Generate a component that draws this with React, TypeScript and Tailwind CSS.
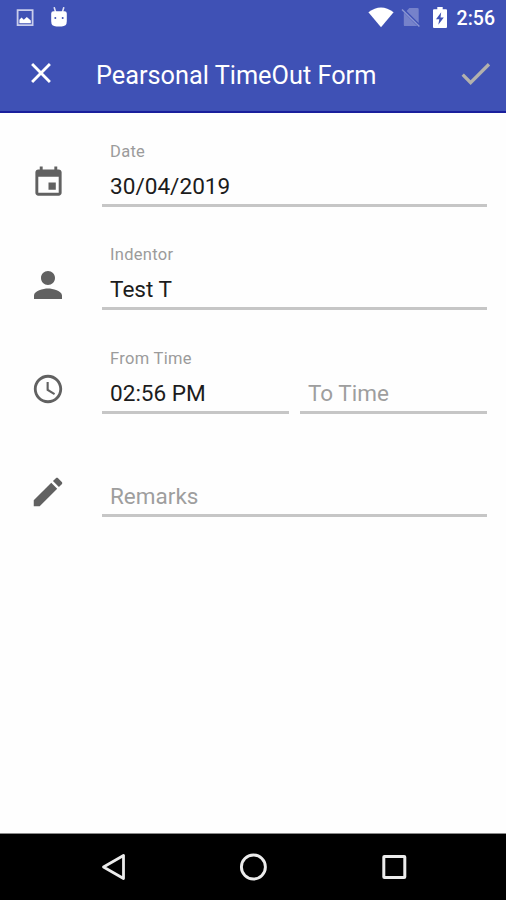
import type { ReactNode } from "react";

type IconProps = { d: string; className?: string };

function Icon({ d, className = "size-[34px]" }: IconProps) {
  return (
    <svg viewBox="0 0 24 24" fill="currentColor" className={className}>
      <path d={d} />
    </svg>
  );
}

const icons = {
  event:
    "M17 12h-5v5h5v-5zM16 1v2H8V1H6v2H5c-1.11 0-1.99.9-1.99 2L3 19c0 1.1.89 2 2 2h14c1.1 0 2-.9 2-2V5c0-1.1-.9-2-2-2h-1V1h-2zm3 18H5V8h14v11z",
  person:
    "M12 12c2.21 0 4-1.79 4-4s-1.79-4-4-4-4 1.79-4 4 1.79 4 4 4zm0 2c-2.67 0-8 1.34-8 4v2h16v-2c0-2.66-5.33-4-8-4z",
  clock:
    "M11.99 2C6.47 2 2 6.48 2 12s4.47 10 9.99 10C17.52 22 22 17.52 22 12S17.52 2 11.99 2zM12 20c-4.42 0-8-3.58-8-8s3.58-8 8-8 8 3.58 8 8-3.58 8-8 8zm.5-13H11v6l5.25 3.15.75-1.23-4.5-2.67z",
  edit: "M3 17.25V21h3.75L17.81 9.94l-3.75-3.75L3 17.25zM20.71 7.04c.39-.39.39-1.02 0-1.41l-2.34-2.34c-.39-.39-1.02-.39-1.41 0l-1.83 1.83 3.75 3.75 1.83-1.83z",
  close:
    "M19 6.41L17.59 5 12 10.59 6.41 5 5 6.41 10.59 12 5 17.59 6.41 19 12 13.41 17.59 19 19 17.59 13.41 12z",
  check: "M9 16.17L4.83 12l-1.42 1.41L9 19 21 7l-1.41-1.41z",
};

function StatusBar() {
  return (
    <div className="flex h-[35px] items-center pl-4 pr-[11px] text-white">
      <svg viewBox="0 0 18 18" className="h-[18px] w-[18px]">
        <path
          d="M1.6 1.2h15v15h-15z"
          fill="none"
          stroke="#c9cdec"
          strokeWidth="1.8"
        />
        <path d="M3.4 14.3v-3.6l2.1-2.1 2.3 2.1 3-2.7 4 3.4v2.9z" fill="#fff" />
      </svg>
      <svg viewBox="0 0 18 20" className="ml-4 h-5 w-[18px] -translate-y-px">
        <path
          d="M4.3 0.8l1.2 4M13.7 0.8l-1.2 4"
          stroke="#dfe2f5"
          strokeWidth="1.6"
          strokeLinecap="round"
        />
        <path
          d="M3.5 4.3h11q2.3 0 2.3 2.3v7.6q0 5.2-5.2 5.2H6.4q-5.2 0-5.2-5.2V6.6q0-2.3 2.3-2.3z"
          fill="#fff"
        />
        <circle cx="5.3" cy="11" r="1" fill="#3f51b5" />
        <circle cx="12.7" cy="11" r="1" fill="#3f51b5" />
      </svg>
      <svg viewBox="0 0 26 21" className="ml-auto h-[21px] w-[26px]">
        <path d="M0.4 5.2Q13-4.3 25.6 5.2L13 20.2z" fill="#fff" />
      </svg>
      <svg viewBox="0 0 20 20" className="ml-[7px] h-5 w-5 -translate-y-px">
        <path
          d="M8.3 1h8.2q1.2 0 1.2 1.2v13.9L5.6 4.1zM2.8 5.6l13.5 13.5H4q-1.2 0-1.2-1.2z"
          fill="#7682ca"
        />
        <path d="M1 2.4l17.4 17" stroke="#8c97d3" strokeWidth="1.4" />
      </svg>
      <svg viewBox="0 0 14 21" className="ml-3 h-[21px] w-3.5">
        <path
          d="M4.3 0h5.4v2.2H13q1 0 1 1V20q0 1-1 1H1q-1 0-1-1V3.2q0-1 1-1h3.3z"
          fill="#fff"
        />
        <path d="M8.2 5.2L3 12.2h3.3l-1 5.6 5.5-7.2H7.5z" fill="#3f51b5" />
      </svg>
      <span className="ml-[10px] pt-[3px] text-[19.5px] font-medium leading-none">
        2:56
      </span>
    </div>
  );
}

function AppBar() {
  return (
    <div className="flex h-[76px] items-center pl-6 pr-[14px] text-white">
      <Icon d={icons.close} className="size-[34px]" />
      <h1 className="ml-[38px] pt-[5px] text-[25.3px] leading-none">
        Pearsonal TimeOut Form
      </h1>
      <Icon
        d={icons.check}
        className="ml-auto size-[39px] translate-x-[3px] text-[#b3b1ad]"
      />
    </div>
  );
}

type FieldProps = { label: string; value?: string };

function Field({ label, value }: FieldProps) {
  return (
    <div className="flex flex-1 flex-col justify-end border-b-3 border-[#c6c6c6] pl-2">
      {value ? (
        <>
          <span className="mb-[13px] text-[16.5px] leading-5 tracking-[0.3px] text-[#9b9b9b]">
            {label}
          </span>
          <span className="mb-[5px] text-[22.6px] leading-6 text-[#1c1c1c]">
            {value}
          </span>
        </>
      ) : (
        <span className="mb-1.5 text-[22.5px] leading-6 text-[#9e9e9e]">
          {label}
        </span>
      )}
    </div>
  );
}

type RowProps = { icon: string; iconClass: string; children: ReactNode };

function Row({ icon, iconClass, children }: RowProps) {
  return (
    <div className="flex h-[103.4px] items-start pl-[27px] pr-[19px]">
      <div className="mt-12 flex size-[42px] shrink-0 items-center justify-center text-[#616161]">
        <Icon d={icon} className={iconClass} />
      </div>
      <div className="ml-[33px] flex h-[94px] flex-1 gap-[11px]">{children}</div>
    </div>
  );
}

function NavBar() {
  return (
    <div className="flex h-[67px] items-center justify-center gap-[113px] border-t border-[#8a8a8a] bg-black">
      <svg viewBox="0 0 28 28" className="size-7" fill="none" stroke="#ececec">
        <path d="M5.5 14L25.5 2.5v23z" strokeWidth="2.8" strokeLinejoin="round" />
      </svg>
      <svg viewBox="0 0 28 28" className="size-7" fill="none" stroke="#ececec">
        <circle cx="14.4" cy="14" r="12" strokeWidth="2.9" />
      </svg>
      <svg viewBox="0 0 28 28" className="size-7" fill="none" stroke="#ececec">
        <rect x="3.8" y="3.5" width="21" height="21" rx="0.6" strokeWidth="3" />
      </svg>
    </div>
  );
}

export default function App() {
  return (
    <div className="flex h-[900px] w-[506px] flex-col overflow-hidden bg-[#fefefe] font-['Roboto',sans-serif]">
      <header className="border-b-2 border-[#1a1f9c] bg-[#3f51b5]">
        <StatusBar />
        <AppBar />
      </header>
      <main className="flex-1">
        <Row icon={icons.event} iconClass="size-[35px]">
          <Field label="Date" value="30/04/2019" />
        </Row>
        <Row icon={icons.person} iconClass="size-[42px] shrink-0">
          <Field label="Indentor" value="Test T" />
        </Row>
        <Row icon={icons.clock} iconClass="size-[34px]">
          <Field label="From Time" value="02:56 PM" />
          <Field label="To Time" />
        </Row>
        <Row icon={icons.edit} iconClass="size-[38px]">
          <Field label="Remarks" />
        </Row>
      </main>
      <NavBar />
    </div>
  );
}
